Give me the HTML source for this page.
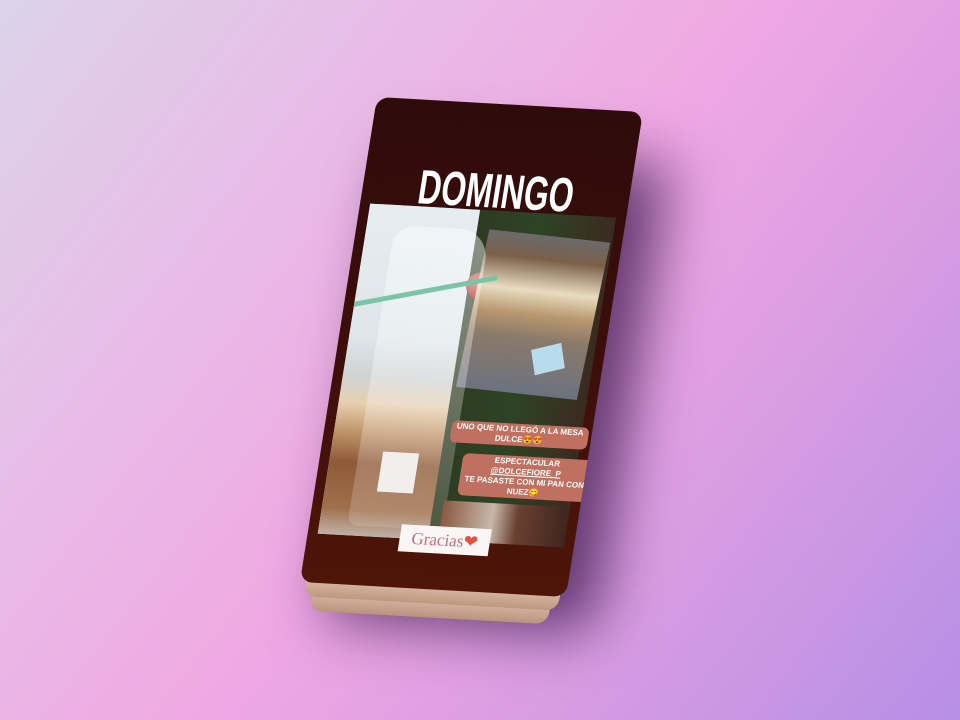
<!DOCTYPE html>
<html><head><meta charset="utf-8"><style>
html,body{margin:0;padding:0}
body{width:960px;height:720px;overflow:hidden;position:relative;
background:linear-gradient(128deg,#dcd3ea 0%,#e9b9e6 30%,#f0a8e4 50%,#d99ce2 72%,#b68fe6 100%);
font-family:"Liberation Sans",sans-serif}
.wrap{position:absolute;left:0;top:0;width:266px;height:485px;transform-origin:0 0;
transform:matrix(1,0.0564,-0.159,1,377,97)}
.shadow{position:absolute;left:30px;top:50px;width:270px;height:470px;border-radius:20px;
background:rgba(40,10,60,.7);filter:blur(30px)}
.layer{position:absolute;border-radius:12px}
.l2{left:14px;right:14px;top:40px;height:473px;background:linear-gradient(180deg,#9a7462 90%,#d8b8a4 96%,#b8947e 100%)}
.l1{left:6px;right:6px;top:20px;height:479px;background:linear-gradient(180deg,#8a6452 90%,#dcbca6 96%,#bc987e 100%)}
.card{position:absolute;left:0;top:0;width:266px;height:485px;border-radius:12px;overflow:hidden;
background:linear-gradient(180deg,#2e0c0a 0%,#3c0e0a 50%,#4e1508 100%)}
.title{position:absolute;left:0;width:266px;top:64px;text-align:center;color:#fff;
font-family:"Liberation Sans Narrow","Liberation Sans",sans-serif;font-weight:bold;font-size:48px;line-height:48px;
transform:scaleX(.66)}
.photo{position:absolute;left:10px;top:106px;width:246px;height:330px;overflow:hidden;
background:linear-gradient(90deg,#dfe7ea 0%,#d6dfe3 30%,#2e3a22 42%,#2d4424 70%,#3b2a20 100%)}
.bag{position:absolute;left:0;top:0;width:110px;height:330px;
background:linear-gradient(180deg,#e6edf0 0%,#dfe6ea 40%,#cfd3d2 52%,#e6d0b0 60%,#c49a70 68%,#8e5a38 78%,#a0704c 92%,#bfb2a8 100%)}
.bag2{position:absolute;left:28px;top:20px;width:95px;height:300px;border-radius:20px 30px 10px 10px;
background:linear-gradient(180deg,rgba(255,255,255,.45),rgba(255,255,255,.15))}
.label{position:absolute;left:52px;top:245px;width:36px;height:40px;background:#f2eeec}
.ribbon{position:absolute;left:-10px;top:82px;width:150px;height:5px;background:#7cc4a8;transform:rotate(-14deg)}
.ball{position:absolute;left:108px;top:62px;width:26px;height:26px;border-radius:50%;background:radial-gradient(circle at 40% 35%,#e07060,#a0201c 70%)}
.inner{position:absolute;left:118px;top:22px;width:122px;height:158px;transform:rotate(3deg);
background:linear-gradient(180deg,#6b6a6c 0%,#7a6048 15%,#e8dcc0 35%,#b8986e 50%,#8a7a6a 65%,#6c7280 100%)}
.inner .nl{position:absolute;left:70px;top:108px;width:30px;height:26px;background:#b8dcec;transform:rotate(-20deg)}
.bottomphoto{position:absolute;top:290px;height:40px;background:linear-gradient(90deg,#8a5a40,#c7b8aa 40%,#6a4032 60%,#3e261e)}
.st{position:absolute;background:#c07060;color:#fff;font-family:"Liberation Sans Narrow","Liberation Sans",sans-serif;font-weight:bold;font-size:8px;line-height:10px;text-align:center;border-radius:6px;padding:1px 5px;white-space:nowrap}
.gr{position:absolute;left:92px;top:422px;width:90px;height:27px;background:#fbf6f6;color:#c86c80;
font-family:"Liberation Serif",serif;font-size:17px;line-height:27px;text-align:center}
</style></head><body>
<div class="wrap">
  <div class="shadow"></div>
  <div class="layer l2"></div>
  <div class="layer l1"></div>
  <div class="card">
    <div class="title">DOMINGO</div>
    <div class="photo">
      <div class="bag"></div>
      <div class="ball"></div>
      <div class="inner"><div class="nl"></div></div>
      <div class="bag2"></div>
      <div class="label"></div>
      <div class="ribbon"></div>
      <div class="bottomphoto" style="left:120px;width:126px"></div>
    </div>
    <div class="st" style="left:126px;top:316px">UNO QUE NO LLEGÓ A LA MESA<br>DULCE😍😍</div>
    <div class="st" style="left:142px;top:348px">ESPECTACULAR<br><u>@DOLCEFIORE_P</u><br>TE PASASTE CON MI PAN CON<br>NUEZ😋</div>
    <div class="gr">Gracias<span style="color:#e8503c">❤</span></div>
  </div>
</div>
</body></html>
